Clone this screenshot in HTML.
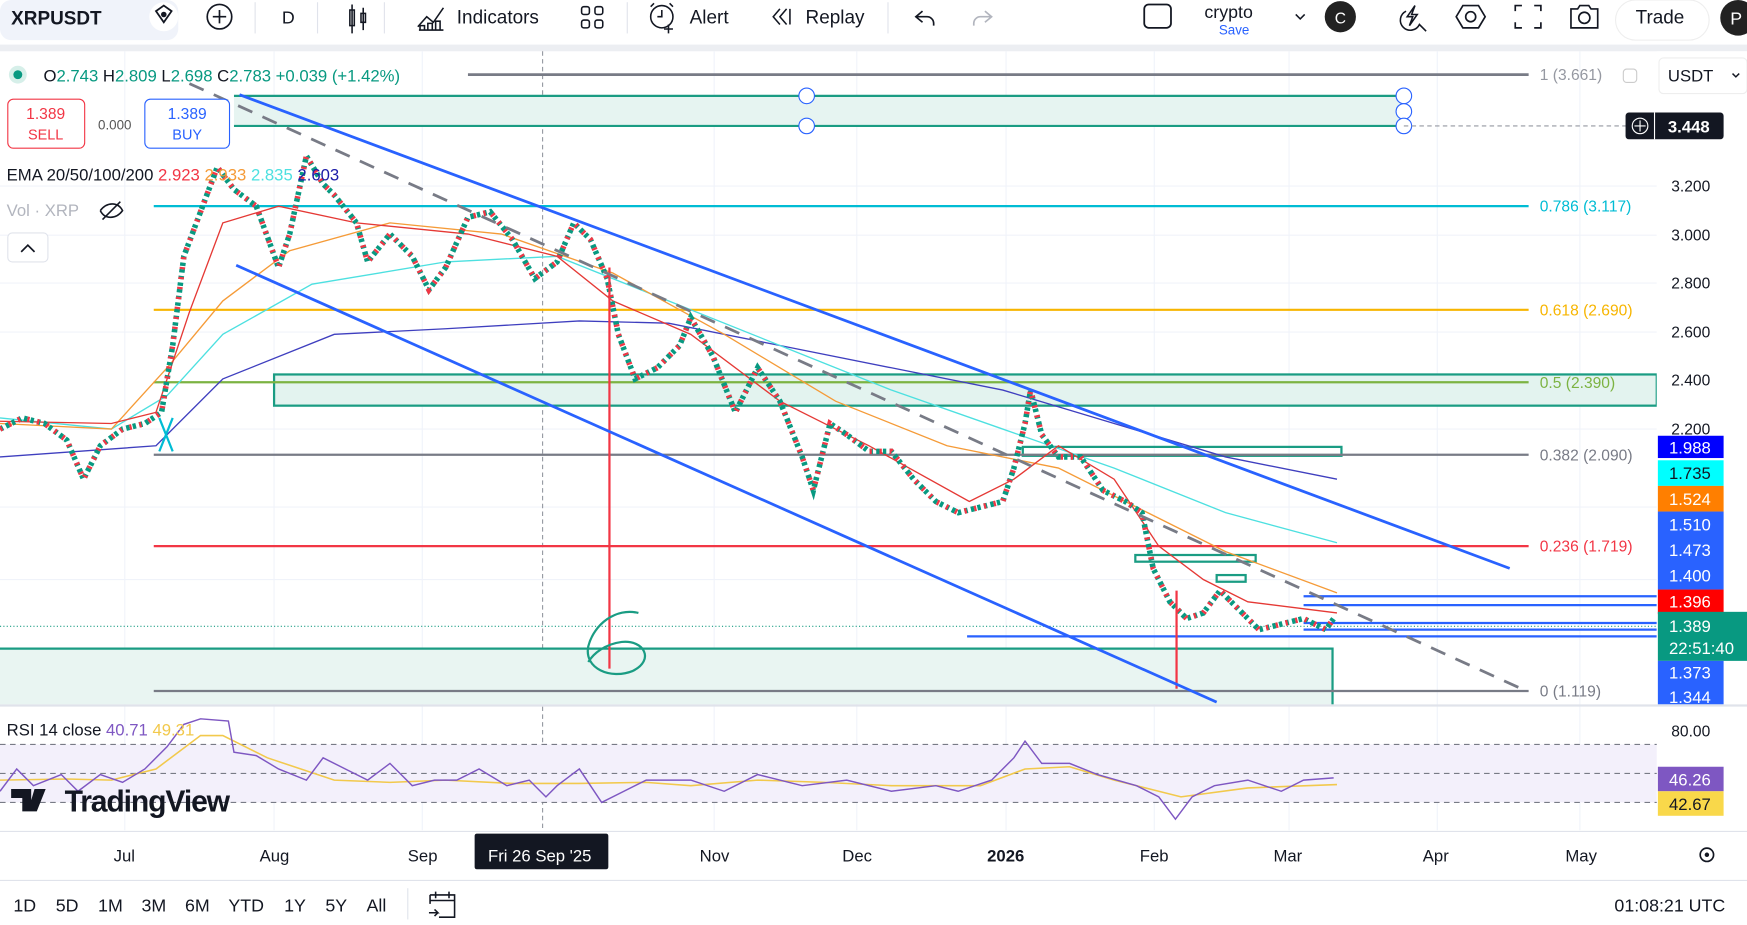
<!DOCTYPE html><html><head><meta charset="utf-8"><style>
html,body{margin:0;padding:0;background:#fff;overflow:hidden}
svg{display:block}
text{font-family:"Liberation Sans",sans-serif}
</style></head><body>
<svg width="1747" height="925" viewBox="0 0 1568 830" preserveAspectRatio="none" xmlns="http://www.w3.org/2000/svg">
<rect width="1568" height="830" fill="#fff"/>
<!-- top toolbar -->
<rect x="0" y="0" width="160" height="36" rx="10" fill="#f0f3fa"/>
<rect x="0" y="40" width="1568" height="6" fill="#eceef2"/>
<text x="10" y="22" font-size="17" font-weight="bold" fill="#131722">XRPUSDT</text>
<circle cx="147" cy="15" r="13" fill="#fff"/>
<path d="M140 10l7-5 7 5-7 10z" fill="none" stroke="#131722" stroke-width="1.6"/><circle cx="147" cy="13" r="2.5" fill="#131722"/>
<circle cx="197" cy="15" r="11" fill="none" stroke="#131722" stroke-width="1.5"/><path d="M197 9v12M191 15h12" stroke="#131722" stroke-width="1.5"/>
<line x1="229" y1="2" x2="229" y2="30" stroke="#e0e3eb"/>
<text x="253" y="21" font-size="16" fill="#131722">D</text>
<line x1="285" y1="2" x2="285" y2="30" stroke="#e0e3eb"/>
<path d="M316 4v26M316 9h-2v14h4V9zM326 7v20M324 12v8h4v-8z" fill="none" stroke="#131722" stroke-width="1.4"/>
<line x1="345" y1="2" x2="345" y2="30" stroke="#e0e3eb"/>
<path d="M375 24l8-9 6 5 9-13M376 27h22M377 27v-4h4v4M384 27v-6h4v6M391 27v-8h4v8" fill="none" stroke="#131722" stroke-width="1.4"/>
<text x="410" y="21" font-size="17" fill="#131722">Indicators</text>
<rect x="522" y="6" width="7" height="7" rx="2" fill="none" stroke="#131722" stroke-width="1.4"/><rect x="534" y="6" width="7" height="7" rx="2" fill="none" stroke="#131722" stroke-width="1.4"/><rect x="522" y="18" width="7" height="7" rx="2" fill="none" stroke="#131722" stroke-width="1.4"/><rect x="534" y="18" width="7" height="7" rx="2" fill="none" stroke="#131722" stroke-width="1.4"/>
<line x1="563" y1="2" x2="563" y2="30" stroke="#e0e3eb"/>
<circle cx="594" cy="15" r="10" fill="none" stroke="#131722" stroke-width="1.4"/><path d="M594 9v6h-4M600 22v8M596 26h8M584 6l3-3M604 6l-3-3" fill="none" stroke="#131722" stroke-width="1.4"/>
<text x="619" y="21" font-size="17" fill="#131722">Alert</text>
<path d="M700 8l-6 7 6 7M706 8l-6 7 6 7M709 8v14" fill="none" stroke="#131722" stroke-width="1.4"/>
<text x="723" y="21" font-size="17" fill="#131722">Replay</text>
<line x1="797" y1="2" x2="797" y2="30" stroke="#e0e3eb"/>
<path d="M828 10l-6 5 6 5M822 15h10a6 6 0 0 1 6 6v2" fill="none" stroke="#131722" stroke-width="1.5"/>
<path d="M884 10l6 5-6 5M890 15h-10a6 6 0 0 0-6 6v2" fill="none" stroke="#b2b5be" stroke-width="1.5"/>
<rect x="1027" y="4" width="24" height="21" rx="4" fill="none" stroke="#131722" stroke-width="1.6"/>
<text x="1081" y="16" font-size="16" fill="#131722">crypto</text>
<text x="1094" y="31" font-size="12" fill="#2962ff">Save</text>
<path d="M1163 13l4 4 4-4" fill="none" stroke="#131722" stroke-width="1.4"/>
<circle cx="1203" cy="15" r="14" fill="#222"/><text x="1198" y="21" font-size="14" fill="#fff">C</text>
<path d="M1270 5l-7 10h5l-3 8 7-10h-5z" fill="none" stroke="#131722" stroke-width="1.4"/><path d="M1262 10a9 9 0 1 0 12 12l6 6" fill="none" stroke="#131722" stroke-width="1.4"/>
<path d="M1313 5h14l6 10-6 10h-14l-6-10z" fill="none" stroke="#131722" stroke-width="1.5"/><circle cx="1320" cy="15" r="4.5" fill="none" stroke="#131722" stroke-width="1.5"/>
<path d="M1360 10V5h6M1377 5h6v5M1383 20v5h-6M1366 25h-6v-5" fill="none" stroke="#131722" stroke-width="1.5"/>
<path d="M1410 8h6l2-3h8l2 3h6v17h-24z" fill="none" stroke="#131722" stroke-width="1.5"/><circle cx="1422" cy="16" r="5" fill="none" stroke="#131722" stroke-width="1.5"/>
<rect x="1450" y="0" width="84" height="36" rx="18" fill="#fff" stroke="#eee"/>
<text x="1468" y="21" font-size="17" fill="#131722">Trade</text>
<circle cx="1560" cy="16" r="16" fill="#222"/><text x="1553" y="22" font-size="16" fill="#fff">P</text>
<!-- grid -->
<g stroke="#f0f3fa">
<line x1="112" y1="46" x2="112" y2="745"/><line x1="246" y1="46" x2="246" y2="745"/><line x1="379" y1="46" x2="379" y2="745"/><line x1="641" y1="46" x2="641" y2="745"/><line x1="769" y1="46" x2="769" y2="745"/><line x1="903" y1="46" x2="903" y2="745"/><line x1="1036" y1="46" x2="1036" y2="745"/><line x1="1157" y1="46" x2="1157" y2="745"/><line x1="1290" y1="46" x2="1290" y2="745"/><line x1="1418" y1="46" x2="1418" y2="745"/>
<line x1="0" y1="167" x2="1487" y2="167"/><line x1="0" y1="211" x2="1487" y2="211"/><line x1="0" y1="254" x2="1487" y2="254"/><line x1="0" y1="298" x2="1487" y2="298"/><line x1="0" y1="385" x2="1487" y2="385"/><line x1="0" y1="455" x2="1487" y2="455"/><line x1="0" y1="520" x2="1487" y2="520"/>
</g>
<line x1="487" y1="46" x2="487" y2="745" stroke="#9598a1" stroke-dasharray="4 3"/>
<!-- zones -->
<rect x="210" y="86" width="1050" height="27" fill="#e6f4f1"/>
<line x1="210" y1="86" x2="1260" y2="86" stroke="#1a9c83" stroke-width="2"/><line x1="210" y1="113" x2="1260" y2="113" stroke="#1a9c83" stroke-width="2"/>
<circle cx="724" cy="86" r="7" fill="#fff" stroke="#2962ff"/><circle cx="724" cy="113" r="7" fill="#fff" stroke="#2962ff"/><circle cx="1260" cy="86" r="7" fill="#fff" stroke="#2962ff"/><circle cx="1260" cy="100" r="7" fill="#fff" stroke="#2962ff"/><circle cx="1260" cy="113" r="7" fill="#fff" stroke="#2962ff"/>
<line x1="1260" y1="113" x2="1460" y2="113" stroke="#9598a1" stroke-dasharray="4 3"/>
<rect x="246" y="336" width="1241" height="28" fill="#e3f3ef" stroke="#1a9c83" stroke-width="2"/>
<rect x="0" y="582" width="1196" height="50" fill="#e9f5f2"/>
<path d="M0 582H1196V632" fill="none" stroke="#1a9c83" stroke-width="2"/>
<rect x="918" y="401" width="286" height="8" fill="none" stroke="#1a9c83" stroke-width="2"/>
<rect x="1019" y="498" width="108" height="6" fill="none" stroke="#1a9c83" stroke-width="2"/>
<rect x="1092" y="516" width="26" height="6" fill="none" stroke="#1a9c83" stroke-width="2"/>
<!-- fib lines -->
<line x1="420" y1="67" x2="1372" y2="67" stroke="#787b86" stroke-width="2.5"/>
<line x1="138" y1="185" x2="1372" y2="185" stroke="#00bcd4" stroke-width="2"/>
<line x1="138" y1="278" x2="1372" y2="278" stroke="#f7b500" stroke-width="2"/>
<line x1="138" y1="343" x2="1372" y2="343" stroke="#7cb342" stroke-width="2"/>
<line x1="138" y1="408" x2="1372" y2="408" stroke="#787b86" stroke-width="2"/>
<line x1="138" y1="490" x2="1372" y2="490" stroke="#f23645" stroke-width="2"/>
<line x1="138" y1="620" x2="1372" y2="620" stroke="#787b86" stroke-width="2"/>
<g font-size="14">
<text x="1382" y="72" fill="#9598a1">1 (3.661)</text>
<text x="1382" y="190" fill="#00bcd4">0.786 (3.117)</text>
<text x="1382" y="283" fill="#f7b500">0.618 (2.690)</text>
<text x="1382" y="348" fill="#7cb342">0.5 (2.390)</text>
<text x="1382" y="413" fill="#787b86">0.382 (2.090)</text>
<text x="1382" y="495" fill="#f23645">0.236 (1.719)</text>
<text x="1382" y="625" fill="#787b86">0 (1.119)</text>
</g>
<!-- blue horizontal lines -->
<g stroke="#2962ff" stroke-width="2">
<line x1="1170" y1="535" x2="1487" y2="535"/><line x1="1170" y1="543" x2="1487" y2="543"/><line x1="1170" y1="559" x2="1487" y2="559"/><line x1="1170" y1="565" x2="1487" y2="565"/><line x1="868" y1="571" x2="1487" y2="571"/>
</g>
<line x1="0" y1="562" x2="1487" y2="562" stroke="#1a9c83" stroke-dasharray="1 2"/>
<!-- EMAs -->
<polyline fill="none" stroke="#3f3fbf" stroke-width="1.2" points="0,410 140,400 200,340 300,300 400,295 520,288 600,290 700,310 800,330 900,350 1000,380 1100,410 1200,430"/>
<polyline fill="none" stroke="#4de0e0" stroke-width="1.2" points="0,375 100,385 150,355 200,300 280,255 400,235 500,230 600,270 700,310 800,350 900,385 1000,420 1100,460 1200,487"/>
<polyline fill="none" stroke="#f59b38" stroke-width="1.2" points="0,380 100,385 150,330 200,270 260,225 350,200 450,210 550,245 650,300 750,360 850,400 950,420 1030,460 1100,495 1200,532"/>
<polyline fill="none" stroke="#e53935" stroke-width="1.2" points="0,378 100,380 140,370 170,280 200,200 250,185 320,200 420,210 500,230 550,270 620,300 700,360 780,400 870,450 910,430 950,400 1000,430 1040,490 1080,520 1120,540 1200,550"/>
<!-- price -->
<polyline fill="none" stroke="#089981" stroke-width="5" stroke-dasharray="3 3" points="0,385 20,375 40,380 60,395 75,430 90,400 110,385 130,380 145,370 155,310 165,230 180,190 195,150 210,170 230,185 250,240 260,210 275,140 290,165 300,175 320,200 330,235 350,210 370,230 385,260 400,240 420,195 440,190 460,215 480,250 500,235 515,200 530,215 545,250 555,300 570,340 590,330 610,310 620,285 640,320 660,370 680,330 700,360 720,410 730,440 745,380 760,390 780,405 800,405 820,430 840,450 860,460 880,455 900,450 910,420 920,380 925,350 935,390 950,410 970,410 990,440 1010,450 1025,460 1035,510 1050,540 1065,555 1080,550 1095,530 1110,545 1130,565 1150,560 1170,555 1190,565 1197,555"/>
<polyline fill="none" stroke="#f23645" stroke-width="5" stroke-dasharray="2 7" points="0,385 20,375 40,380 60,395 75,430 90,400 110,385 130,380 145,370 155,310 165,230 180,190 195,150 210,170 230,185 250,240 260,210 275,140 290,165 300,175 320,200 330,235 350,210 370,230 385,260 400,240 420,195 440,190 460,215 480,250 500,235 515,200 530,215 545,250 555,300 570,340 590,330 610,310 620,285 640,320 660,370 680,330 700,360 720,410 730,440 745,380 760,390 780,405 800,405 820,430 840,450 860,460 880,455 900,450 910,420 920,380 925,350 935,390 950,410 970,410 990,440 1010,450 1025,460 1035,510 1050,540 1065,555 1080,550 1095,530 1110,545 1130,565 1150,560 1170,555 1190,565 1197,555"/>
<line x1="547" y1="240" x2="547" y2="600" stroke="#f23645" stroke-width="2"/>
<line x1="1056" y1="530" x2="1056" y2="618" stroke="#f23645" stroke-width="2"/>
<!-- channel -->
<line x1="215" y1="85" x2="1355" y2="510" stroke="#2962ff" stroke-width="2.5"/>
<line x1="212" y1="238" x2="1092" y2="630" stroke="#2962ff" stroke-width="2.5"/>
<line x1="170" y1="75" x2="1370" y2="620" stroke="#787b86" stroke-width="2.5" stroke-dasharray="14 10"/>
<path d="M143 405l12-30M143 375l12 30" stroke="#00bcd4" stroke-width="2"/>
<path d="M573 550c-20-5-40 10-45 30-4 20 20 30 40 22 20-10 10-28-10-26-15 2-25 10-30 18" fill="none" stroke="#1a9c83" stroke-width="2"/>
<!-- legend -->
<circle cx="16" cy="67" r="8" fill="#d6efe9"/><circle cx="16" cy="67" r="4" fill="#089981"/>
<text x="39" y="73" font-size="15" fill="#131722">O<tspan fill="#089981">2.743</tspan>  H<tspan fill="#089981">2.809</tspan>  L<tspan fill="#089981">2.698</tspan>  C<tspan fill="#089981">2.783 +0.039 (+1.42%)</tspan></text>
<rect x="7" y="89" width="69" height="44" rx="5" fill="#fff" stroke="#f23645"/>
<text x="41" y="107" font-size="14" fill="#f23645" text-anchor="middle">1.389</text><text x="41" y="125" font-size="13" fill="#f23645" text-anchor="middle">SELL</text>
<text x="88" y="116" font-size="12" fill="#555">0.000</text>
<rect x="130" y="89" width="76" height="44" rx="5" fill="#fff" stroke="#2962ff"/>
<text x="168" y="107" font-size="14" fill="#2962ff" text-anchor="middle">1.389</text><text x="168" y="125" font-size="13" fill="#2962ff" text-anchor="middle">BUY</text>
<text x="6" y="162" font-size="15" fill="#131722">EMA 20/50/100/200  <tspan fill="#f23645">2.923</tspan> <tspan fill="#f59b38">2.933</tspan> <tspan fill="#4de0e0">2.835</tspan> <tspan fill="#1c1ca8">2.603</tspan></text>
<text x="6" y="194" font-size="15" fill="#b2b5be">Vol · XRP</text>
<path d="M90 189c6-8 16-8 20 0-6 8-16 8-20 0M92 197l16-16" fill="none" stroke="#131722" stroke-width="1.4"/>
<rect x="7" y="209" width="36" height="26" rx="4" fill="#fff" stroke="#e0e3eb"/><path d="M19 226l6-6 6 6" fill="none" stroke="#131722" stroke-width="1.5"/>
<!-- right axis -->
<rect x="1487" y="46" width="81" height="586" fill="#fff"/>
<rect x="1489" y="52" width="79" height="32" rx="4" fill="#fff" stroke="#eee"/>
<text x="1497" y="73" font-size="15" fill="#131722">USDT</text><path d="M1555 66l3 3 3-3" fill="none" stroke="#131722" stroke-width="1.3"/>
<rect x="1457" y="62" width="12" height="12" rx="3" fill="none" stroke="#ccc"/>
<rect x="1459" y="101" width="88" height="24" rx="3" fill="#131722"/>
<circle cx="1472" cy="113" r="7" fill="none" stroke="#fff"/><path d="M1472 108v10M1467 113h10" stroke="#fff"/>
<line x1="1485" y1="101" x2="1485" y2="125" stroke="#fff"/>
<text x="1497" y="119" font-size="15" font-weight="bold" fill="#fff">3.448</text>
<g font-size="14" fill="#131722">
<text x="1500" y="172">3.200</text><text x="1500" y="216">3.000</text><text x="1500" y="259">2.800</text><text x="1500" y="303">2.600</text><text x="1500" y="346">2.400</text><text x="1500" y="390">2.200</text>
</g>
<rect x="1488" y="391" width="59" height="20" fill="#0000ff"/><text x="1498" y="407" font-size="15" fill="#fff">1.988</text>
<rect x="1488" y="413" width="59" height="23" fill="#00ffff"/><text x="1498" y="430" font-size="15" fill="#131722">1.735</text>
<rect x="1488" y="436" width="59" height="23" fill="#ff7f00"/><text x="1498" y="453" font-size="15" fill="#fff">1.524</text>
<rect x="1488" y="459" width="59" height="70" fill="#2962ff"/><text x="1498" y="476" font-size="15" fill="#fff">1.510</text><text x="1498" y="499" font-size="15" fill="#fff">1.473</text><text x="1498" y="522" font-size="15" fill="#fff">1.400</text>
<rect x="1488" y="529" width="59" height="22" fill="#ff0000"/><text x="1498" y="545" font-size="15" fill="#fff">1.396</text>
<rect x="1488" y="549" width="80" height="44" fill="#089981"/><text x="1498" y="567" font-size="15" fill="#fff">1.389</text><text x="1498" y="587" font-size="15" fill="#fff">22:51:40</text>
<rect x="1488" y="593" width="59" height="39" fill="#2962ff"/><text x="1498" y="609" font-size="15" fill="#fff">1.373</text><text x="1498" y="631" font-size="15" fill="#fff">1.344</text>
<!-- RSI pane -->
<line x1="0" y1="633" x2="1568" y2="633" stroke="#e0e3eb" stroke-width="2"/>
<rect x="0" y="668" width="1487" height="52" fill="#f3f0fb"/>
<g stroke="#787b86" stroke-dasharray="5 4"><line x1="0" y1="668" x2="1487" y2="668"/><line x1="0" y1="694" x2="1487" y2="694"/><line x1="0" y1="720" x2="1487" y2="720"/></g>
<polyline fill="none" stroke="#f2c94c" stroke-width="1.4" points="0,700 60,699 100,700 140,690 180,660 200,660 240,680 300,700 350,702 400,700 460,703 520,703 580,702 620,705 680,700 740,702 800,705 880,705 920,690 960,688 1000,700 1060,715 1120,707 1200,704"/>
<polyline fill="none" stroke="#7e57c2" stroke-width="1.3" points="0,710 15,690 30,705 55,695 70,710 90,695 110,702 130,690 150,670 165,650 180,645 205,647 210,675 230,678 250,690 275,700 290,680 310,690 330,700 350,685 370,705 390,700 410,700 430,690 455,705 475,700 490,715 500,705 520,690 540,720 560,710 580,700 620,700 650,710 680,695 720,705 760,700 800,710 840,705 860,710 890,700 910,680 920,665 935,685 960,685 985,695 1020,705 1040,715 1055,735 1070,715 1090,705 1120,700 1150,710 1170,700 1197,698"/>
<text x="6" y="660" font-size="15" fill="#131722">RSI 14 close <tspan fill="#7e57c2">40.71</tspan> <tspan fill="#f2c94c">49.31</tspan></text>
<text x="1500" y="661" font-size="14" fill="#131722">80.00</text>
<rect x="1488" y="688" width="59" height="22" fill="#7e57c2"/><text x="1498" y="705" font-size="15" fill="#fff">46.26</text>
<rect x="1488" y="710" width="59" height="22" fill="#f9d84a"/><text x="1498" y="727" font-size="15" fill="#131722">42.67</text>
<!-- TV logo -->
<path d="M10 708h18v20h-8v-12h-10zM31 708h10l-8 20h-8z" fill="#131722"/>
<text x="58" y="728" font-size="27" font-weight="bold" fill="#131722" letter-spacing="-1">TradingView</text>
<!-- time axis -->
<line x1="0" y1="746" x2="1568" y2="746" stroke="#e0e3eb"/>
<g font-size="15" fill="#131722">
<text x="102" y="773">Jul</text><text x="233" y="773">Aug</text><text x="366" y="773">Sep</text><text x="628" y="773">Nov</text><text x="756" y="773">Dec</text><text x="886" y="773" font-weight="bold">2026</text><text x="1023" y="773">Feb</text><text x="1143" y="773">Mar</text><text x="1277" y="773">Apr</text><text x="1405" y="773">May</text>
</g>
<rect x="426" y="748" width="120" height="32" rx="2" fill="#131722"/><text x="438" y="773" font-size="15" fill="#fff">Fri 26 Sep '25</text>
<circle cx="1532" cy="767" r="6" fill="none" stroke="#131722" stroke-width="1.5"/><circle cx="1532" cy="767" r="2" fill="#131722"/>
<line x1="0" y1="790" x2="1568" y2="790" stroke="#e0e3eb"/>
<g font-size="16" fill="#131722">
<text x="12" y="818">1D</text><text x="50" y="818">5D</text><text x="88" y="818">1M</text><text x="127" y="818">3M</text><text x="166" y="818">6M</text><text x="205" y="818">YTD</text><text x="255" y="818">1Y</text><text x="292" y="818">5Y</text><text x="329" y="818">All</text>
</g>
<line x1="366" y1="797" x2="366" y2="825" stroke="#e0e3eb"/>
<path d="M386 803h22v20h-14M386 803v8M386 808h22M391 800v6M403 800v6M385 819h8l-3-3M393 819l-3 3" fill="none" stroke="#131722" stroke-width="1.4"/>
<text x="1449" y="818" font-size="16" fill="#131722">01:08:21 UTC</text>
</svg>
</body></html>
